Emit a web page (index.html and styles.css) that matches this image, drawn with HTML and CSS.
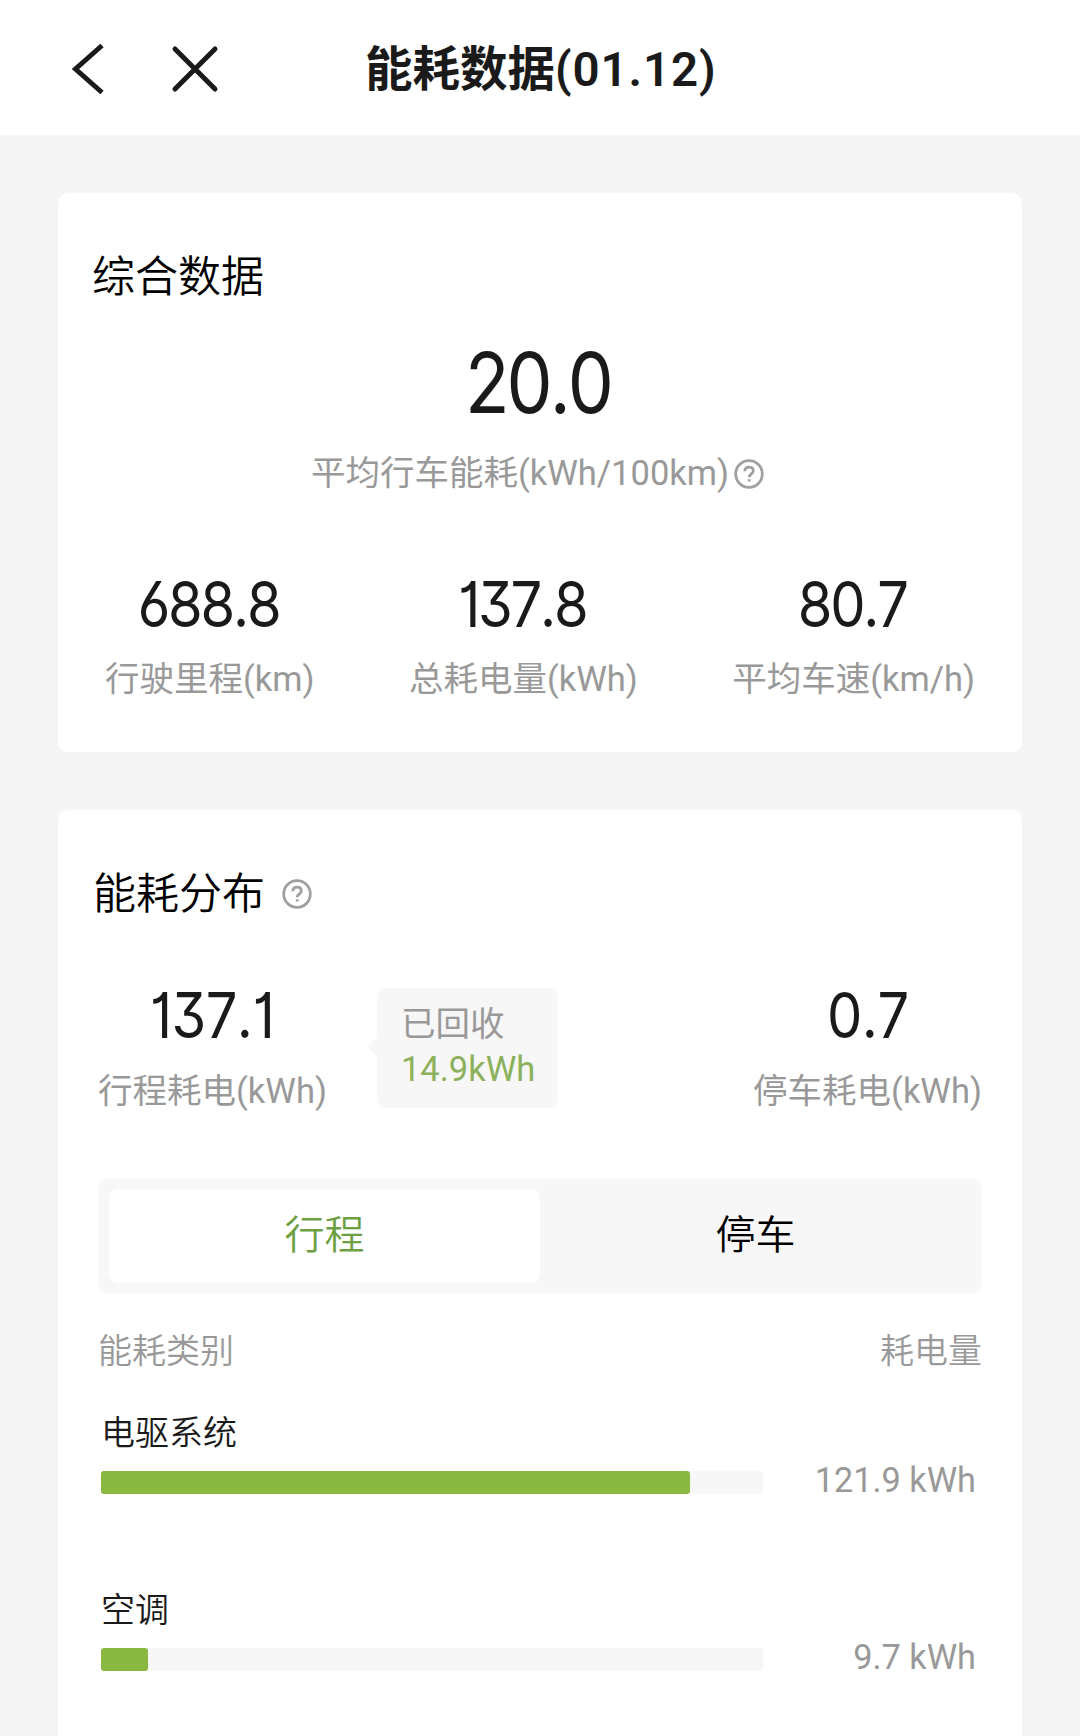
FILE: index.html
```html
<!DOCTYPE html>
<html lang="zh-CN">
<head>
<meta charset="utf-8">
<title>能耗数据</title>
<link rel="stylesheet" href="styles.css">
</head>
<body>
<header class="topbar">
  <nav class="topbar-nav">
    <svg class="icon-back" viewBox="0 0 32 52" aria-label="返回"><path d="M30 2.500L3.500 26L30 49.500"/></svg>
    <svg class="icon-close" viewBox="0 0 48 48" aria-label="关闭"><path d="M4 4L44 44M44 4L4 44"/></svg>
  </nav>
  <h1 class="topbar-title">能耗数据<span class="topbar-date">(01.12)</span></h1>
</header>
<main class="page">
  <section class="card summary">
    <h2 class="card-title">综合数据</h2>
    <div class="hero">
      <div class="hero-value"><span class="num">20.0</span></div>
      <div class="hero-label">
        <span class="label">平均行车能耗(kWh/100km)</span>
        <svg class="icon-help" viewBox="0 0 30 30"><circle cx="15" cy="15" r="13.300"/><path d="M10.800 12.300C10.800 9.600 12.600 8.200 15.100 8.200C17.600 8.200 19.300 9.700 19.300 11.900C19.300 14.800 15.200 15 15.200 18.200M15.200 20.300V22.600"/></svg>
      </div>
    </div>
    <div class="stats">
      <div class="stat"><div class="value"><span class="num">688.8</span></div><div class="label">行驶里程(km)</div></div>
      <div class="stat"><div class="value"><span class="num">137.8</span></div><div class="label">总耗电量(kWh)</div></div>
      <div class="stat"><div class="value"><span class="num">80.7</span></div><div class="label">平均车速(km/h)</div></div>
    </div>
  </section>
  <section class="card breakdown">
    <div class="breakdown-head">
      <h2 class="card-title">能耗分布</h2>
      <svg class="icon-help" viewBox="0 0 30 30"><circle cx="15" cy="15" r="13.300"/><path d="M10.800 12.300C10.800 9.600 12.600 8.200 15.100 8.200C17.600 8.200 19.300 9.700 19.300 11.900C19.300 14.800 15.200 15 15.200 18.200M15.200 20.300V22.600"/></svg>
    </div>
    <div class="split">
      <div class="stat"><div class="value"><span class="num num-loose">137.1</span></div><div class="label">行程耗电(kWh)</div></div>
      <div class="bubble">
        <div class="bubble-label">已回收</div>
        <div class="bubble-value">14.9kWh</div>
      </div>
      <div class="stat stat-parked"><div class="value"><span class="num num-loose">0.7</span></div><div class="label">停车耗电(kWh)</div></div>
    </div>
    <div class="tabs">
      <div class="tab tab-active">行程</div>
      <div class="tab">停车</div>
    </div>
    <div class="list-head"><span>能耗类别</span><span>耗电量</span></div>
    <div class="item">
      <div class="item-name">电驱系统</div>
      <div class="item-row">
        <div class="track"><div class="fill" style="width: 89%"></div></div>
        <div class="item-value">121.9 kWh</div>
      </div>
    </div>
    <div class="item">
      <div class="item-name">空调</div>
      <div class="item-row">
        <div class="track"><div class="fill" style="width: 7.1%"></div></div>
        <div class="item-value">9.7 kWh</div>
      </div>
    </div>
  </section>
</main>
</body>
</html>
```
FILE: styles.css
```css
* { box-sizing: border-box; }

body {
  margin: 0;
  height: 1736px;
  overflow: hidden;
  background: #f5f5f5;
  color: #1a1a1a;
  font-family: Roboto, "Noto Sans CJK SC", sans-serif;
  font-size: 34px;
  font-weight: 400;
  line-height: 40px;
}

h1, h2 { margin: 0; font-weight: 350; }

svg { display: block; fill: none; flex: none; }

.topbar {
  height: 135px;
  padding: 3px 0 0 72px;
  background: #fff;
  display: flex;
  align-items: center;
}

.topbar-nav {
  display: flex;
  align-items: center;
  gap: 67px;
  width: 293px;
}

.icon-back { width: 32px; height: 52px; stroke: #1a1a1a; stroke-width: 5; }
.icon-close { width: 48px; height: 48px; stroke: #1a1a1a; stroke-width: 5; stroke-linecap: round; }

.topbar-title {
  padding-top: 2px;
  font-size: 47.500px;
  line-height: 60px;
  font-weight: 700;
  white-space: nowrap;
}

.topbar-date { font-weight: 600; letter-spacing: 0.900px; }

.page {
  display: flex;
  flex-direction: column;
  gap: 58px;
  padding: 58px 58px 0;
}

.card { background: #fff; border-radius: 10px; flex: none; }

.card-title { font-size: 43px; line-height: 60px; color: #000; }

.num {
  display: inline-block;
  font-family: Inter, Roboto, sans-serif;
  font-weight: 430;
  font-feature-settings: "cv01", "cv03", "cv09";
  font-kerning: none;
  letter-spacing: -0.040em;
  margin-right: 0.040em;
  transform: scaleX(0.890);
}

.hero-value .num { transform: scaleX(0.870); }

.num-loose { letter-spacing: -0.010em; margin-right: 0; }

.label { font-size: 34.500px; color: #999; white-space: nowrap; }

.icon-help { width: 30px; height: 30px; stroke: #a0a0a0; stroke-width: 2.800; }

.summary { height: 559px; padding: 54px 34px 0; }

.hero {
  display: flex;
  flex-direction: column;
  align-items: center;
}

.hero-value { font-size: 84px; line-height: 84px; margin-top: 34px; }

.hero-label {
  display: flex;
  align-items: center;
  gap: 5px;
  margin-top: 26px;
  padding-right: 5px;
}

.hero-label .icon-help { margin-top: 2px; }

.stats {
  display: flex;
  justify-content: space-between;
  padding: 0 13px;
  margin-top: 79px;
}

.stat {
  display: flex;
  flex-direction: column;
  align-items: center;
}

.value { font-size: 63px; line-height: 64px; }
.stat .label { margin-top: 21px; }

.breakdown { height: 960px; padding: 54px 40px 0; }

.breakdown-head {
  display: flex;
  align-items: center;
  gap: 17px;
  margin-left: -5px;
}

.split {
  display: flex;
  align-items: flex-start;
  margin-top: 59px;
}

.split .stat .label { margin-top: 22px; }

.bubble {
  position: relative;
  width: 181px;
  height: 120px;
  margin: 5px 0 0 50px;
  padding: 14px 24px;
  border-radius: 10px;
  background: #f7f7f7;
  font-size: 34.500px;
  line-height: 45px;
  color: #999;
}

.bubble::before {
  content: "";
  position: absolute;
  left: -10px;
  top: 49px;
  border: 10px solid transparent;
  border-left-width: 0;
  border-right-color: #f7f7f7;
}

.bubble-value { color: #8bb15a; }

.stat-parked { margin-left: auto; }

.tabs {
  display: flex;
  height: 114px;
  margin-top: 68px;
  padding: 10px 11px;
  border-radius: 11px;
  background: #f7f7f7;
}

.tab {
  flex: 1;
  border-radius: 9px;
  font-size: 40px;
  font-weight: 350;
  line-height: 94px;
  text-align: center;
  color: #000;
}

.tab-active { background: #fff; color: #6d9f43; }

.list-head {
  display: flex;
  justify-content: space-between;
  margin-top: 38px;
  font-weight: 350;
  color: #999;
}

.item { height: 177px; padding: 42px 0 0 3px; }
.item-name { font-weight: 350; }

.item-row {
  display: flex;
  align-items: center;
  justify-content: space-between;
  height: 24px;
  margin-top: 17px;
  padding-right: 6px;
}

.track {
  width: 662px;
  height: 23px;
  border-radius: 3px;
  background: #f7f7f7;
}

.fill { height: 100%; border-radius: 3px; background: #8bb841; }

.item-value { color: #999; font-size: 34.300px; margin-top: -4px; }
```
